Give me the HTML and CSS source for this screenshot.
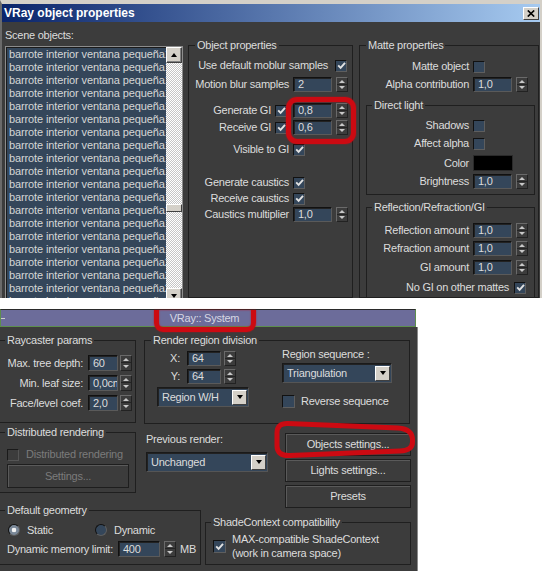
FILE: index.html
```html
<!DOCTYPE html>
<html>
<head>
<meta charset="utf-8">
<link rel="stylesheet" href="styles.css">
</head>
<body>
<div class="win">
  <div class="titlebar">
    <span class="title">VRay object properties</span>
    <span class="xbtn"><svg width="8" height="7" viewBox="0 0 8 7"><path d="M0.8 0.5 L7.2 6.5 M7.2 0.5 L0.8 6.5" stroke="#000" stroke-width="1.7" fill="none"/></svg></span>
  </div>
  <div class="win-body">
    <div class="scene-col">
      <div class="lbl-top">Scene objects:</div>
      <div class="listbox">
        <div class="items">
          <div class="item">barrote interior ventana pequeña1</div>
          <div class="item">barrote interior ventana pequeña1</div>
          <div class="item">barrote interior ventana pequeña1</div>
          <div class="item">barrote interior ventana pequeña1</div>
          <div class="item">barrote interior ventana pequeña1</div>
          <div class="item">barrote interior ventana pequeña1</div>
          <div class="item">barrote interior ventana pequeña1</div>
          <div class="item">barrote interior ventana pequeña1</div>
          <div class="item">barrote interior ventana pequeña1</div>
          <div class="item">barrote interior ventana pequeña1</div>
          <div class="item">barrote interior ventana pequeña1</div>
          <div class="item">barrote interior ventana pequeña1</div>
          <div class="item">barrote interior ventana pequeña1</div>
          <div class="item">barrote interior ventana pequeña1</div>
          <div class="item">barrote interior ventana pequeña1</div>
          <div class="item">barrote interior ventana pequeña1</div>
          <div class="item">barrote interior ventana pequeña2</div>
          <div class="item">barrote interior ventana pequeña2</div>
          <div class="item">barrote interior ventana pequeña2</div>
          <div class="item">barrote interior ventana pequeña2</div>
        </div>
        <div class="vscroll">
          <div class="sbtn up"></div>
          <div class="track"><div class="thumb"></div></div>
          <div class="sbtn down"></div>
        </div>
      </div>
    </div>

    <div class="group objprops">
      <div class="legend">Object properties</div>
      <div class="row mt6"><span class="lbl wide">Use default moblur samples</span><span class="cb"><svg class="ck" width="9" height="9" viewBox="0 0 9 9"><path d="M1.2 4.4 L3.6 6.9 L8 1.8"/></svg></span></div>
      <div class="row mt4"><span class="lbl">Motion blur samples</span><span class="fld">2</span><span class="spin"></span></div>
      <div class="row mt11"><span class="lbl withcb">Generate GI<span class="cb"><svg class="ck" width="9" height="9" viewBox="0 0 9 9"><path d="M1.2 4.4 L3.6 6.9 L8 1.8"/></svg></span></span><span class="fld">0,8</span><span class="spin"></span></div>
      <div class="row mt2"><span class="lbl withcb">Receive GI<span class="cb"><svg class="ck" width="9" height="9" viewBox="0 0 9 9"><path d="M1.2 4.4 L3.6 6.9 L8 1.8"/></svg></span></span><span class="fld">0,6</span><span class="spin"></span></div>
      <div class="row mt7"><span class="lbl">Visible to GI</span><span class="cb"><svg class="ck" width="9" height="9" viewBox="0 0 9 9"><path d="M1.2 4.4 L3.6 6.9 L8 1.8"/></svg></span></div>
      <div class="row mt18"><span class="lbl">Generate caustics</span><span class="cb"><svg class="ck" width="9" height="9" viewBox="0 0 9 9"><path d="M1.2 4.4 L3.6 6.9 L8 1.8"/></svg></span></div>
      <div class="row mt1"><span class="lbl">Receive caustics</span><span class="cb"><svg class="ck" width="9" height="9" viewBox="0 0 9 9"><path d="M1.2 4.4 L3.6 6.9 L8 1.8"/></svg></span></div>
      <div class="row mt1"><span class="lbl">Caustics multiplier</span><span class="fld">1,0</span><span class="spin"></span></div>
    </div>

    <div class="group matte">
      <div class="legend">Matte properties</div>
      <div class="row mt7"><span class="lbl">Matte object</span><span class="cb"></span></div>
      <div class="row"><span class="lbl">Alpha contribution</span><span class="fld">1,0</span><span class="spin"></span></div>
      <div class="group sub">
        <div class="legend">Direct light</div>
        <div class="row mt6"><span class="lbl">Shadows</span><span class="cb"></span></div>
        <div class="row"><span class="lbl">Affect alpha</span><span class="cb"></span></div>
        <div class="row h16 mt4"><span class="lbl">Color</span><span class="swatch"></span></div>
        <div class="row"><span class="lbl">Brightness</span><span class="fld">1,0</span><span class="spin"></span></div>
      </div>
      <div class="group sub refl">
        <div class="legend">Reflection/Refraction/GI</div>
        <div class="row mt9"><span class="lbl">Reflection amount</span><span class="fld">1,0</span><span class="spin"></span></div>
        <div class="row"><span class="lbl">Refraction amount</span><span class="fld">1,0</span><span class="spin"></span></div>
        <div class="row mt4"><span class="lbl">GI amount</span><span class="fld">1,0</span><span class="spin"></span></div>
        <div class="row mt5"><span class="lbl nogi">No GI on other mattes</span><span class="cb"><svg class="ck" width="9" height="9" viewBox="0 0 9 9"><path d="M1.2 4.4 L3.6 6.9 L8 1.8"/></svg></span></div>
      </div>
    </div>
  </div>
</div>

<div class="rollout">
  <div class="roll-head"><span class="minus"></span><span class="roll-title">VRay:: System</span></div>
  <div class="roll-body">
    <div class="sec">
      <div class="group raycast">
        <div class="legend">Raycaster params</div>
        <div class="row h16 mt8"><span class="lbl">Max. tree depth:</span><span class="fld w30">60</span><span class="spin ml2"></span></div>
        <div class="row h16 mt4"><span class="lbl">Min. leaf size:</span><span class="fld w30">0,0cm</span><span class="spin ml2"></span></div>
        <div class="row h16 mt4"><span class="lbl">Face/level coef.</span><span class="fld w30">2,0</span><span class="spin ml2"></span></div>
      </div>
      <div class="group region">
        <div class="legend">Render region division</div>
        <div class="reg-inner">
          <div class="reg-left">
            <div class="row mt4"><span class="lbl">X:</span><span class="fld w34">64</span><span class="spin ml3"></span></div>
            <div class="row"><span class="lbl">Y:</span><span class="fld w34">64</span><span class="spin ml3"></span></div>
            <div class="dd w92 mt3"><span class="dd-text">Region W/H</span><span class="dd-btn"></span></div>
          </div>
          <div class="reg-right">
            <div class="plain mt1">Region sequence :</div>
            <div class="dd w110 mt2"><span class="dd-text">Triangulation</span><span class="dd-btn"></span></div>
            <div class="row mt11 gap6"><span class="cb c13"></span><span>Reverse sequence</span></div>
          </div>
        </div>
      </div>
    </div>

    <div class="sec sec2">
      <div class="group dist">
        <div class="legend">Distributed rendering</div>
        <div class="row h13 mt9 indent7 gap7"><span class="cb off"></span><span class="dis">Distributed rendering</span></div>
        <div class="btn settings dis">Settings...</div>
      </div>
      <div class="prev">
        <div class="plain mt1">Previous render:</div>
        <div class="dd w122 mt6"><span class="dd-text">Unchanged</span><span class="dd-btn"></span></div>
      </div>
      <div class="btns">
        <div class="btn">Objects settings...</div>
        <div class="btn">Lights settings...</div>
        <div class="btn">Presets</div>
      </div>
    </div>

    <div class="sec sec3">
      <div class="group defgeo">
        <div class="legend">Default geometry</div>
        <div class="radrow">
          <span class="radopt"><span class="rad on"></span>Static</span>
          <span class="radopt"><span class="rad"></span>Dynamic</span>
        </div>
        <div class="row h16 mt5 indent7"><span class="memlbl">Dynamic memory limit:</span><span class="fld w42">400</span><span class="spin"></span><span class="unit">MB</span></div>
      </div>
      <div class="group shade">
        <div class="legend">ShadeContext compatibility</div>
        <div class="shade-row"><span class="cb c13"><svg class="ck" width="9" height="9" viewBox="0 0 9 9"><path d="M1.2 4.4 L3.6 6.9 L8 1.8"/></svg></span><span class="two">MAX-compatible ShadeContext<br>(work in camera space)</span></div>
      </div>
    </div>
  </div>
</div>

<div class="mark mark1"></div>
<div class="mark mark2"></div>
<svg class="mark3" width="150" height="48" viewBox="0 0 150 48"><path d="M18 7.5 L128 12 Q142.5 13 142.5 24 L142.5 26 Q142.5 34.5 130 35 L20 39.5 Q7 40 7 30 L7 17 Q7 7 18 7.5 Z" fill="none" stroke="#cc0a12" stroke-width="5" stroke-linejoin="round"/></svg>
</body>
</html>
```

FILE: styles.css
```css
* { box-sizing: border-box; }
body {
  margin: 0;
  background: #ffffff;
  font: 11px/13px "Liberation Sans", Arial, sans-serif;
  letter-spacing: -0.25px;
  color: #dcdcdc;
}

/* ---------- top window ---------- */
.win {
  width: 542px;
  border-top: 4px solid #d4d0c8;
  border-left: 2px solid #6a6a6a;
  border-right: 2px solid #d4d0c8;
  background: #3c3c3c;
}
.titlebar {
  height: 18px;
  display: flex;
  align-items: center;
  padding-left: 2px;
  background: linear-gradient(90deg, #0a246a, #a6caf0);
}
.title { font-weight: bold; font-size: 12px; color: #fff; letter-spacing: 0; }
.xbtn {
  margin-left: auto;
  margin-right: 1px;
  width: 16px;
  height: 13px;
  background: #d4d0c8;
  border: 1px solid;
  border-color: #fff #404040 #404040 #fff;
  display: flex;
  align-items: center;
  justify-content: center;
}
.win-body {
  height: 276px;
  overflow: hidden;
  display: flex;
  align-items: flex-start;
  padding-left: 3px;
}
.scene-col { width: 178px; flex: none; padding-top: 7px; }
.lbl-top { height: 13px; }
.listbox {
  margin-top: 4px;
  height: 260px;
  border: 1px solid #8c8c8c;
  display: flex;
  background: #34465a;
}
.items {
  width: 160px;
  flex: none;
  overflow: hidden;
  padding-top: 1px;
  box-shadow: inset 1px 1px 0 #1a1a1a;
}
.item {
  height: 13px;
  white-space: nowrap;
  padding-left: 3px;
  color: #d6d6d6;
  letter-spacing: -0.12px;
}
.vscroll { width: 16px; flex: none; display: flex; flex-direction: column; }
.sbtn {
  height: 16px;
  flex: none;
  background: #d4d0c8;
  border: 1px solid;
  border-color: #fff #404040 #404040 #fff;
  box-shadow: inset -1px -1px 0 #808080;
  display: flex;
  align-items: center;
  justify-content: center;
}
.sbtn::after {
  content: "";
  border-left: 3.5px solid transparent;
  border-right: 3.5px solid transparent;
  border-bottom: 4px solid #000;
}
.sbtn.down::after { border-bottom: 0; border-top: 4px solid #000; }
.track {
  height: 225px;
  flex: none;
  background: repeating-conic-gradient(#ffffff 0 25%, #c6c6c6 0 50%) 0 0 / 2px 2px;
}
.thumb {
  margin-top: 141px;
  height: 8px;
  background: #d4d0c8;
  border: 1px solid;
  border-color: #fff #404040 #404040 #fff;
}

/* ---------- group boxes ---------- */
.group { border: 1px solid #1f1f1f; flex: none; }
.legend {
  width: max-content;
  margin: -7px 0 0 5px;
  padding: 0 2px;
  height: 13px;
  background: #3c3c3c;
  white-space: nowrap;
}
.objprops { margin: 23px 0 0 5px; width: 165px; height: 253px; }
.objprops > .legend, .matte > .legend { margin-left: 6px; }
.matte { margin: 23px 0 0 6px; width: 180px; height: 253px; }
.sub { margin: 13px 3px 0 6px; padding-bottom: 5px; }
.sub.refl { margin-top: 12px; padding-bottom: 4px; }

/* ---------- rows & controls ---------- */
.row { display: flex; align-items: center; height: 15px; margin-top: 3px; }
.row.h16 { height: 16px; }
.row.h13 { height: 13px; }
.lbl {
  flex: none;
  display: flex;
  justify-content: flex-end;
  align-items: center;
  gap: 4px;
  padding-right: 4px;
  white-space: nowrap;
}
.objprops .lbl { width: 104px; }
.objprops .lbl.wide { width: 146px; padding-right: 7px; }
.objprops .lbl.withcb { padding-right: 6px; }
.matte .lbl { width: 113px; }
.sub .lbl { width: 106px; }
.sub .lbl.nogi { width: 147px; padding-right: 5px; }

.mt1 { margin-top: 1px; }
.mt2 { margin-top: 2px; }
.mt3 { margin-top: 3px; }
.mt4 { margin-top: 4px; }
.mt5 { margin-top: 5px; }
.mt6 { margin-top: 6px; }
.mt7 { margin-top: 7px; }
.mt8 { margin-top: 8px; }
.mt9 { margin-top: 9px; }
.mt11 { margin-top: 11px; }
.mt18 { margin-top: 18px; }

.fld {
  width: 39px;
  height: 15px;
  flex: none;
  background: #34465a;
  border: 1px solid;
  border-color: #111 #5a5a5a #5a5a5a #111;
  box-shadow: inset 1px 1px 0 #222;
  padding-left: 4px;
  line-height: 13px;
  overflow: hidden;
  white-space: nowrap;
}
.row.h16 .fld { height: 16px; line-height: 14px; }
.fld.w30 { width: 30px; }
.fld.w34 { width: 34px; }
.fld.w42 { width: 42px; }
.spin {
  width: 12px;
  height: 15px;
  margin-left: 4px;
  flex: none;
  border: 1px solid;
  border-color: #6a6a6a #222 #222 #6a6a6a;
  background: linear-gradient(#3c3c3c 6px, #242424 6px, #242424 7px, #3c3c3c 7px);
  display: flex;
  flex-direction: column;
  justify-content: space-around;
  align-items: center;
}
.row.h16 .spin { height: 16px; }
.spin.ml2 { margin-left: 2px; }
.spin.ml3 { margin-left: 3px; }
.spin::before {
  content: "";
  border-left: 3px solid transparent;
  border-right: 3px solid transparent;
  border-bottom: 3px solid #c8c8c8;
}
.spin::after {
  content: "";
  border-left: 3px solid transparent;
  border-right: 3px solid transparent;
  border-top: 3px solid #c8c8c8;
}
.cb {
  width: 12px;
  height: 12px;
  flex: none;
  background: #34465a;
  border: 1px solid;
  border-color: #111 #5e5e5e #5e5e5e #111;
  display: flex;
  align-items: center;
  justify-content: center;
}
.cb.c13 { width: 13px; height: 13px; }
.cb.off { background: #3c3c3c; border-color: #1a1a1a #555 #555 #1a1a1a; }
.ck path { fill: none; stroke: #e2e2e2; stroke-width: 1.9; }
.swatch { width: 40px; height: 16px; flex: none; background: #000; border: 1px solid #2a2a2a; }

.dd {
  display: flex;
  align-items: center;
  height: 20px;
  background: #34465a;
  border: 1px solid;
  border-color: #1a1a1a #555 #555 #1a1a1a;
  box-shadow: inset 1px 1px 0 #222;
  padding-left: 4px;
}
.dd.w92 { width: 92px; }
.dd.w110 { width: 110px; }
.dd.w122 { width: 122px; }
.dd-text { flex: 1; white-space: nowrap; overflow: hidden; }
.dd-btn {
  width: 15px;
  height: 15px;
  flex: none;
  margin-right: 1px;
  background: #d4d0c8;
  border: 1px solid;
  border-color: #fff #404040 #404040 #fff;
  display: flex;
  align-items: center;
  justify-content: center;
}
.dd-btn::after {
  content: "";
  border-left: 3.5px solid transparent;
  border-right: 3.5px solid transparent;
  border-top: 4px solid #000;
}

/* ---------- rollout ---------- */
.rollout { width: 418px; margin-top: 11px; }
.roll-head {
  width: 416px;
  height: 18px;
  background: #6c6c9a;
  border: 1px solid #5d8e4d;
  border-top-color: #2a2a2a;
  display: flex;
  align-items: center;
}
.minus { width: 4px; height: 1px; background: #cfcfcf; flex: none; margin-right: 4px; }
.roll-title { flex: 1; text-align: center; padding-right: 15px; color: #d6d6e2; }
.roll-body {
  height: 244px;
  background: #3c3c3c;
  border-right: 1px solid #8a8a8a;
  padding-top: 13px;
  overflow: hidden;
}
.sec { display: flex; align-items: flex-start; }
.sec2 { margin-top: 8px; }
.sec3 { margin-top: 2px; }

.raycast { margin-left: -1px; width: 137px; height: 83px; }
.raycast .lbl { width: 88px; padding-right: 5px; }
.region { margin-left: 8px; width: 266px; height: 84px; }
.region > .legend { margin-left: 6px; }
.reg-inner { display: flex; }
.reg-left { width: 137px; flex: none; padding-left: 12px; }
.reg-left .lbl { width: 30px; padding-right: 7px; }
.reg-right { flex: 1; }
.plain { height: 13px; white-space: nowrap; }
.gap6 { gap: 6px; }
.gap7 { gap: 7px; }
.indent7 { padding-left: 7px; }

.dist { margin-left: -1px; width: 137px; height: 61px; }
.dis { color: #7b7b7b; }
.btn {
  height: 23px;
  border: 1px solid #1e1e1e;
  box-shadow: inset 1px 1px 0 #5a5a5a;
  display: flex;
  align-items: center;
  justify-content: center;
  white-space: nowrap;
}
.btn.settings { margin: 3px 0 0 7px; width: 122px; height: 24px; }
.prev { margin-left: 10px; width: 122px; flex: none; }
.btns {
  margin: 1px 0 0 17px;
  width: 126px;
  flex: none;
  display: flex;
  flex-direction: column;
  gap: 3px;
}

.defgeo { margin-left: -1px; width: 202px; height: 55px; }
.radrow { display: flex; height: 12px; margin-top: 7px; padding-left: 8px; }
.radopt { width: 87px; display: flex; align-items: center; gap: 7px; flex: none; }
.rad {
  width: 12px;
  height: 12px;
  flex: none;
  border-radius: 50%;
  background: #34465a;
  border: 1px solid;
  border-color: #111 #5e5e5e #5e5e5e #111;
}
.rad.on { background: radial-gradient(circle, #f2f2f2 0 2px, #7a8898 2.6px); }
.memlbl { width: 111px; flex: none; white-space: nowrap; }
.unit { margin-left: 4px; }

.shade { margin: 12px 0 0 4px; width: 206px; height: 43px; }
.shade-row { display: flex; align-items: center; gap: 6px; padding-left: 7px; margin-top: 3px; }
.two { line-height: 14px; white-space: nowrap; }

/* ---------- red annotation marks ---------- */
.mark {
  position: absolute;
  border: 5px solid #cc0a12;
  box-shadow: 0 0 1.5px #cc0a12, inset 0 0 1.5px #cc0a12;
}
.mark1 { left: 286px; top: 97px; width: 70px; height: 47px; border-radius: 11px; }
.mark2 { left: 154px; top: 310px; width: 102px; height: 22px; border-top: 0; border-radius: 0 0 9px 9px; }
.mark3 { position: absolute; left: 270px; top: 416px; }
```
